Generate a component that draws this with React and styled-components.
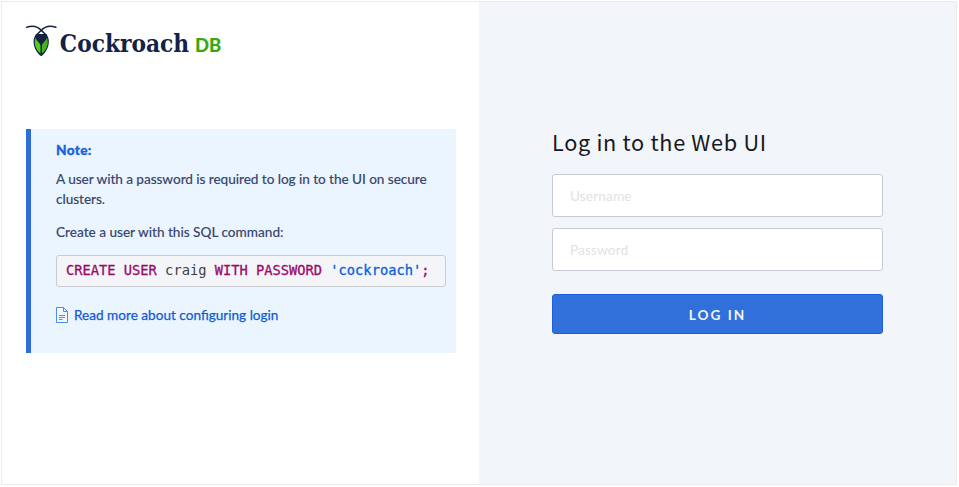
import React from "react";
import styled, { createGlobalStyle } from "styled-components";

const GlobalStyle = createGlobalStyle`
  *, *::before, *::after { box-sizing: border-box; }
  body { margin: 0; background: #fff; font-family: Lato, sans-serif; }
`;

const Page = styled.main`
  display: grid;
  grid-template-columns: 477px 1fr;
  width: 956px;
  height: 484px;
  margin: 1px;
  border: 1px solid #ebebeb;
`;

const InfoPane = styled.section`
  display: flex;
  flex-direction: column;
  gap: 70px;
  padding: 21px 24px;
  background: #fff;
`;

const Logo = styled.svg`
  display: block;
  width: 200px;
  height: 36px;
  flex: none;
`;

const Wordmark = styled.text`
  font-family: "DejaVu Serif Condensed", "DejaVu Serif", serif;
  font-stretch: condensed;
  font-weight: 700;
  font-size: 25px;
  fill: #142246;
`;

const WordmarkSuffix = styled.text`
  font-family: Lato, sans-serif;
  font-weight: 900;
  font-size: 18.5px;
  fill: #37a80e;
`;

const Note = styled.aside`
  display: flex;
  flex-direction: column;
  align-items: flex-start;
  width: 430px;
  height: 224px;
  padding: 11px 10px 0 25px;
  border-left: 5px solid #2e6dda;
  background: #eaf5ff;
  color: #394669;
  font-size: 13.6px;
  line-height: 20px;
`;

const NoteTitle = styled.h2`
  margin: 0 0 10px;
  color: #1b62d9;
  font-size: 13.7px;
  font-weight: 900;
  line-height: 20px;
  letter-spacing: 0.3px;
  -webkit-text-stroke: 0.3px currentColor;
`;

const NoteText = styled.p`
  margin: 0 0 14px;
  font-weight: 500;
  line-height: 19.5px;
  letter-spacing: ${(p) => p.$tracking || "0"};
  -webkit-text-stroke: 0.1px currentColor;
`;

const Code = styled.pre`
  width: 390px;
  height: 32px;
  margin: -2px 0 18px;
  padding: 0 9px;
  border: 1px solid #c9cbce;
  border-radius: 3px;
  background: #f3f5f9;
  color: #3c3f45;
  font-family: "DejaVu Sans Mono", monospace;
  font-size: 13.73px;
  line-height: 29px;
`;

const Token = styled.span`
  color: ${(p) => (p.$kind === "string" ? "#0a5fdc" : "#9b0a68")};
  -webkit-text-stroke: 0.3px currentColor;
`;

const DocsLink = styled.a`
  display: flex;
  align-items: center;
  gap: 6px;
  color: #0f5bd5;
  font-size: 13.6px;
  text-decoration: none;
  -webkit-text-stroke: 0.25px currentColor;
`;

const DocIcon = styled.svg`
  width: 12px;
  height: 16px;
`;

const LoginPane = styled.section`
  padding: 124px 73px 0;
  background: #f2f5f9;
`;

const Form = styled.form`
  display: flex;
  flex-direction: column;
  width: 331px;
`;

const Title = styled.h1`
  margin: 0 0 17px;
  color: #17181b;
  font-family: "Noto Sans CJK SC", sans-serif;
  font-size: 21.7px;
  font-weight: 400;
  line-height: 31px;
  letter-spacing: 0.68px;
  white-space: nowrap;
`;

const Field = styled.input`
  height: 43px;
  margin: 0 0 11px;
  padding: 0 17px 1px;
  border: 1px solid #c5cad5;
  border-radius: 3px;
  outline: none;
  background: #fff;
  color: #242a35;
  font-family: Lato, sans-serif;
  font-size: 13.7px;
  letter-spacing: 0.1px;

  &::placeholder { color: #e1e2e4; opacity: 1; }
`;

const Submit = styled.button`
  height: 40px;
  margin: 12px 0 0;
  padding: 1px 0 0;
  border: 1px solid #1b5fdb;
  border-radius: 3px;
  background: #316fdb;
  color: #f0f5fe;
  font-family: Lato, sans-serif;
  font-size: 13.6px;
  font-weight: 700;
  letter-spacing: 2px;
`;

export default function App() {
  return (
    <>
      <GlobalStyle />
      <Page>
        <InfoPane>
          <Logo viewBox="0 0 200 36" role="img" aria-label="Cockroach DB">
            <path d="M10 11h10.500c1.800 3 2.500 5.500 2.300 8.500-.3 5-3 10.500-7.600 13.700C10.600 30 7.900 24.500 7.600 19.500 7.400 16.500 8.200 14 10 11z" fill="#142246" />
            <path d="M9.500 14.500c.6 3.500 5 5 5 8.500v7.500c-4.900-4-7-10-5-16z" fill="#55cb1c" />
            <path d="M21 14.500c-.6 3.500-5 5-5 8.500v7.500c4.900-4 7-10 5-16z" fill="#43b51a" />
            <path d="m15.300 8.500 2.500 2.500h-5z" fill="#fff" />
            <path d="M.800 4.200C7 2.300 12 3.500 15.300 7.500 18.600 3.500 23.600 2.300 29.800 4.200M15.300 7.300 10.800 11.800M15.300 7.300l4.500 4.500" fill="none" stroke="#142246" strokeWidth="1.600" strokeLinecap="round" />
            <g transform="translate(33.800 28.500) scale(.968 1)"><Wordmark>Cockroach</Wordmark></g>
            <WordmarkSuffix x="169" y="28.500">DB</WordmarkSuffix>
          </Logo>
          <Note>
            <NoteTitle>Note:</NoteTitle>
            <NoteText $tracking="-0.05px">A user with a password is required to log in to the UI on secure clusters.</NoteText>
            <NoteText>Create a user with this SQL command:</NoteText>
            <Code>
              <Token>CREATE USER</Token> craig <Token>WITH PASSWORD</Token>{" "}
              <Token $kind="string">'cockroach'</Token><Token>;</Token>
            </Code>
            <DocsLink>
              <DocIcon viewBox="0 0 12 16" fill="none" stroke="#4a8bec">
                <path d="M.5.500h7l4 4v11H.500z" fill="#f2f8ff" />
                <path d="M7.500.500v4h4" />
                <path d="M3 8.500h6M3 10.500h6M3 12.500h3.500" />
              </DocIcon>
              Read more about configuring login
            </DocsLink>
          </Note>
        </InfoPane>
        <LoginPane>
          <Form onSubmit={(e) => e.preventDefault()}>
            <Title>Log in to the Web UI</Title>
            <Field placeholder="Username" aria-label="Username" />
            <Field type="password" placeholder="Password" aria-label="Password" />
            <Submit>LOG IN</Submit>
          </Form>
        </LoginPane>
      </Page>
    </>
  );
}
